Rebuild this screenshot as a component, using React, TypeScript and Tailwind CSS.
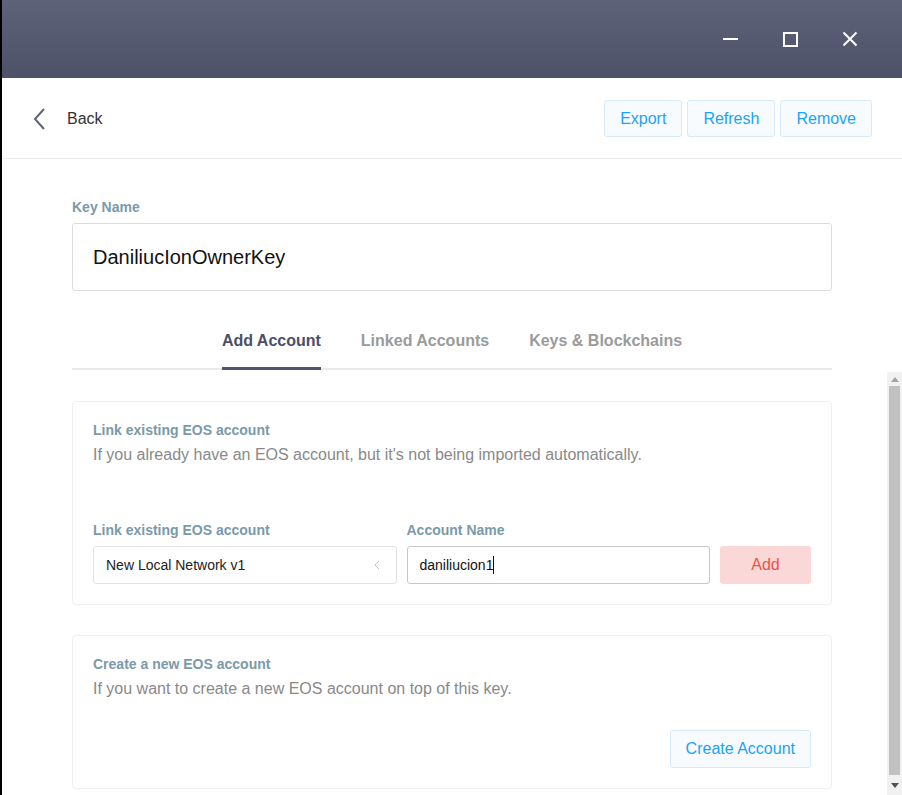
import React from "react";

const font = { fontFamily: '"Liberation Sans", Arial, sans-serif' };

function TitleBar() {
  return (
    <div className="h-[78px] shrink-0 bg-gradient-to-b from-[#5e6279] to-[#4e5269] flex items-center justify-end">
      <div className="flex items-center h-full">
        <div className="w-[60px] h-full flex items-center justify-center">
          <div className="w-[15px] h-[2px] bg-white" />
        </div>
        <div className="w-[60px] h-full flex items-center justify-center">
          <div className="w-[15px] h-[15px] border-2 border-white" />
        </div>
        <div className="w-[60px] h-full flex items-center justify-center mr-[22px]">
          <svg width="16" height="16" viewBox="0 0 16 16">
            <path d="M1.5 1.5 L14.5 14.5 M14.5 1.5 L1.5 14.5" stroke="white" strokeWidth="2" />
          </svg>
        </div>
      </div>
    </div>
  );
}

function HeaderButton({ children }: { children: React.ReactNode }) {
  return (
    <button className="h-[37px] px-[15px] border border-[#d6eaf9] rounded-[3px] bg-[#f8fbfe] text-[#1ba3f3] text-[16px] leading-none">
      {children}
    </button>
  );
}

function Header() {
  return (
    <div className="h-[81px] shrink-0 border-b border-[#ececec] flex items-center justify-between pl-[30px] pr-[30px] pt-[1px]">
      <div className="flex items-center">
        <svg width="16" height="22" viewBox="0 0 16 22">
          <path d="M12 1 L3 11 L12 21" stroke="#60647a" strokeWidth="2" fill="none" />
        </svg>
        <span className="ml-[19px] text-[16px] text-[#333]">Back</span>
      </div>
      <div className="flex items-center gap-[5px]">
        <HeaderButton>Export</HeaderButton>
        <HeaderButton>Refresh</HeaderButton>
        <HeaderButton>Remove</HeaderButton>
      </div>
    </div>
  );
}

function Label({ children }: { children: React.ReactNode }) {
  return <div className="text-[14px] leading-[16px] font-bold text-[#7a9aa9]">{children}</div>;
}

function Scrollbar() {
  return (
    <div className="w-[15px] shrink-0 bg-[#f1f1f1] flex flex-col items-stretch mt-[2px]">
      <div className="h-[14px] flex items-center justify-center">
        <svg width="8" height="5" viewBox="0 0 8 5">
          <path d="M0 5 L4 0 L8 5 Z" fill="#a3a3a3" />
        </svg>
      </div>
      <div className="flex-1 mx-[2px] bg-[#c1c1c1]" />
      <div className="h-[20px] flex items-center justify-center">
        <svg width="8" height="5" viewBox="0 0 8 5">
          <path d="M0 0 L8 0 L4 5 Z" fill="#505050" />
        </svg>
      </div>
    </div>
  );
}

export default function App() {
  return (
    <div className="w-[902px] h-[795px] overflow-hidden flex flex-col bg-white border-l-2 border-black" style={font}>
      <TitleBar />
      <Header />
      <div className="flex-1 flex flex-col min-h-0">
        <div className="pl-[70px] w-[830px] shrink-0">
          <div className="pt-[40px]">
            <Label>Key Name</Label>
            <div className="mt-[8px] h-[68px] border border-[#dcdcdc] rounded-[3px] flex items-center px-[20px] text-[20px] text-[#111]">
              DaniliucIonOwnerKey
            </div>
          </div>
          <div className="mt-[40px] flex justify-center gap-10 border-b-2 border-[#e9e9e9]">
            <div className="pb-[16px] border-b-[3px] border-[#4e5370] -mb-[2px] text-[16px] leading-[20px] font-bold text-[#4b4f66]">
              Add Account
            </div>
            <div className="pb-[16px] border-b-[3px] border-transparent -mb-[2px] text-[16px] leading-[20px] font-bold text-[#9b9b9b]">
              Linked Accounts
            </div>
            <div className="pb-[16px] border-b-[3px] border-transparent -mb-[2px] text-[16px] leading-[20px] font-bold text-[#9b9b9b]">
              Keys &amp; Blockchains
            </div>
          </div>
        </div>
        <div className="flex-1 flex min-h-0">
          <div className="flex-1 pl-[70px] pr-[55px] pt-[31px] overflow-hidden">
            <div className="border border-[#efefef] rounded-[4px] p-[20px]">
              <Label>Link existing EOS account</Label>
              <div className="mt-[7px] text-[16px] leading-[20px] text-[#898989]">
                If you already have an EOS account, but it's not being imported automatically.
              </div>
              <div className="mt-[57px] flex items-end gap-[10px]">
                <div className="flex-1">
                  <Label>Link existing EOS account</Label>
                  <div className="mt-[8px] h-[38px] border border-[#e3e3e3] rounded-[3px] flex items-center justify-between pl-[12px] pr-[16px] text-[14px] text-[#222]">
                    <span>New Local Network v1</span>
                    <svg width="6" height="10" viewBox="0 0 6 10">
                      <path d="M5 1 L1 5 L5 9" stroke="#c4c4c4" strokeWidth="1" fill="none" />
                    </svg>
                  </div>
                </div>
                <div className="flex-1">
                  <Label>Account Name</Label>
                  <div className="mt-[8px] h-[38px] border border-[#c8c8c8] rounded-[3px] flex items-center pl-[12px] text-[14px] text-[#111]">
                    <span>daniliucion1</span>
                    <span className="w-px h-[18px] bg-[#111]" />
                  </div>
                </div>
                <button className="w-[91px] h-[38px] rounded-[3px] bg-[#fad8d7] text-[#ef5048] text-[16px]">
                  Add
                </button>
              </div>
            </div>
            <div className="mt-[30px] border border-[#efefef] rounded-[4px] p-[20px]">
              <Label>Create a new EOS account</Label>
              <div className="mt-[7px] text-[16px] leading-[20px] text-[#898989]">
                If you want to create a new EOS account on top of this key.
              </div>
              <div className="mt-[31px] flex justify-end">
                <button className="h-[38px] px-[15px] border border-[#d6eaf9] rounded-[3px] bg-[#f8fbfe] text-[#1ba3f3] text-[16px]">
                  Create Account
                </button>
              </div>
            </div>
          </div>
          <Scrollbar />
        </div>
      </div>
    </div>
  );
}
